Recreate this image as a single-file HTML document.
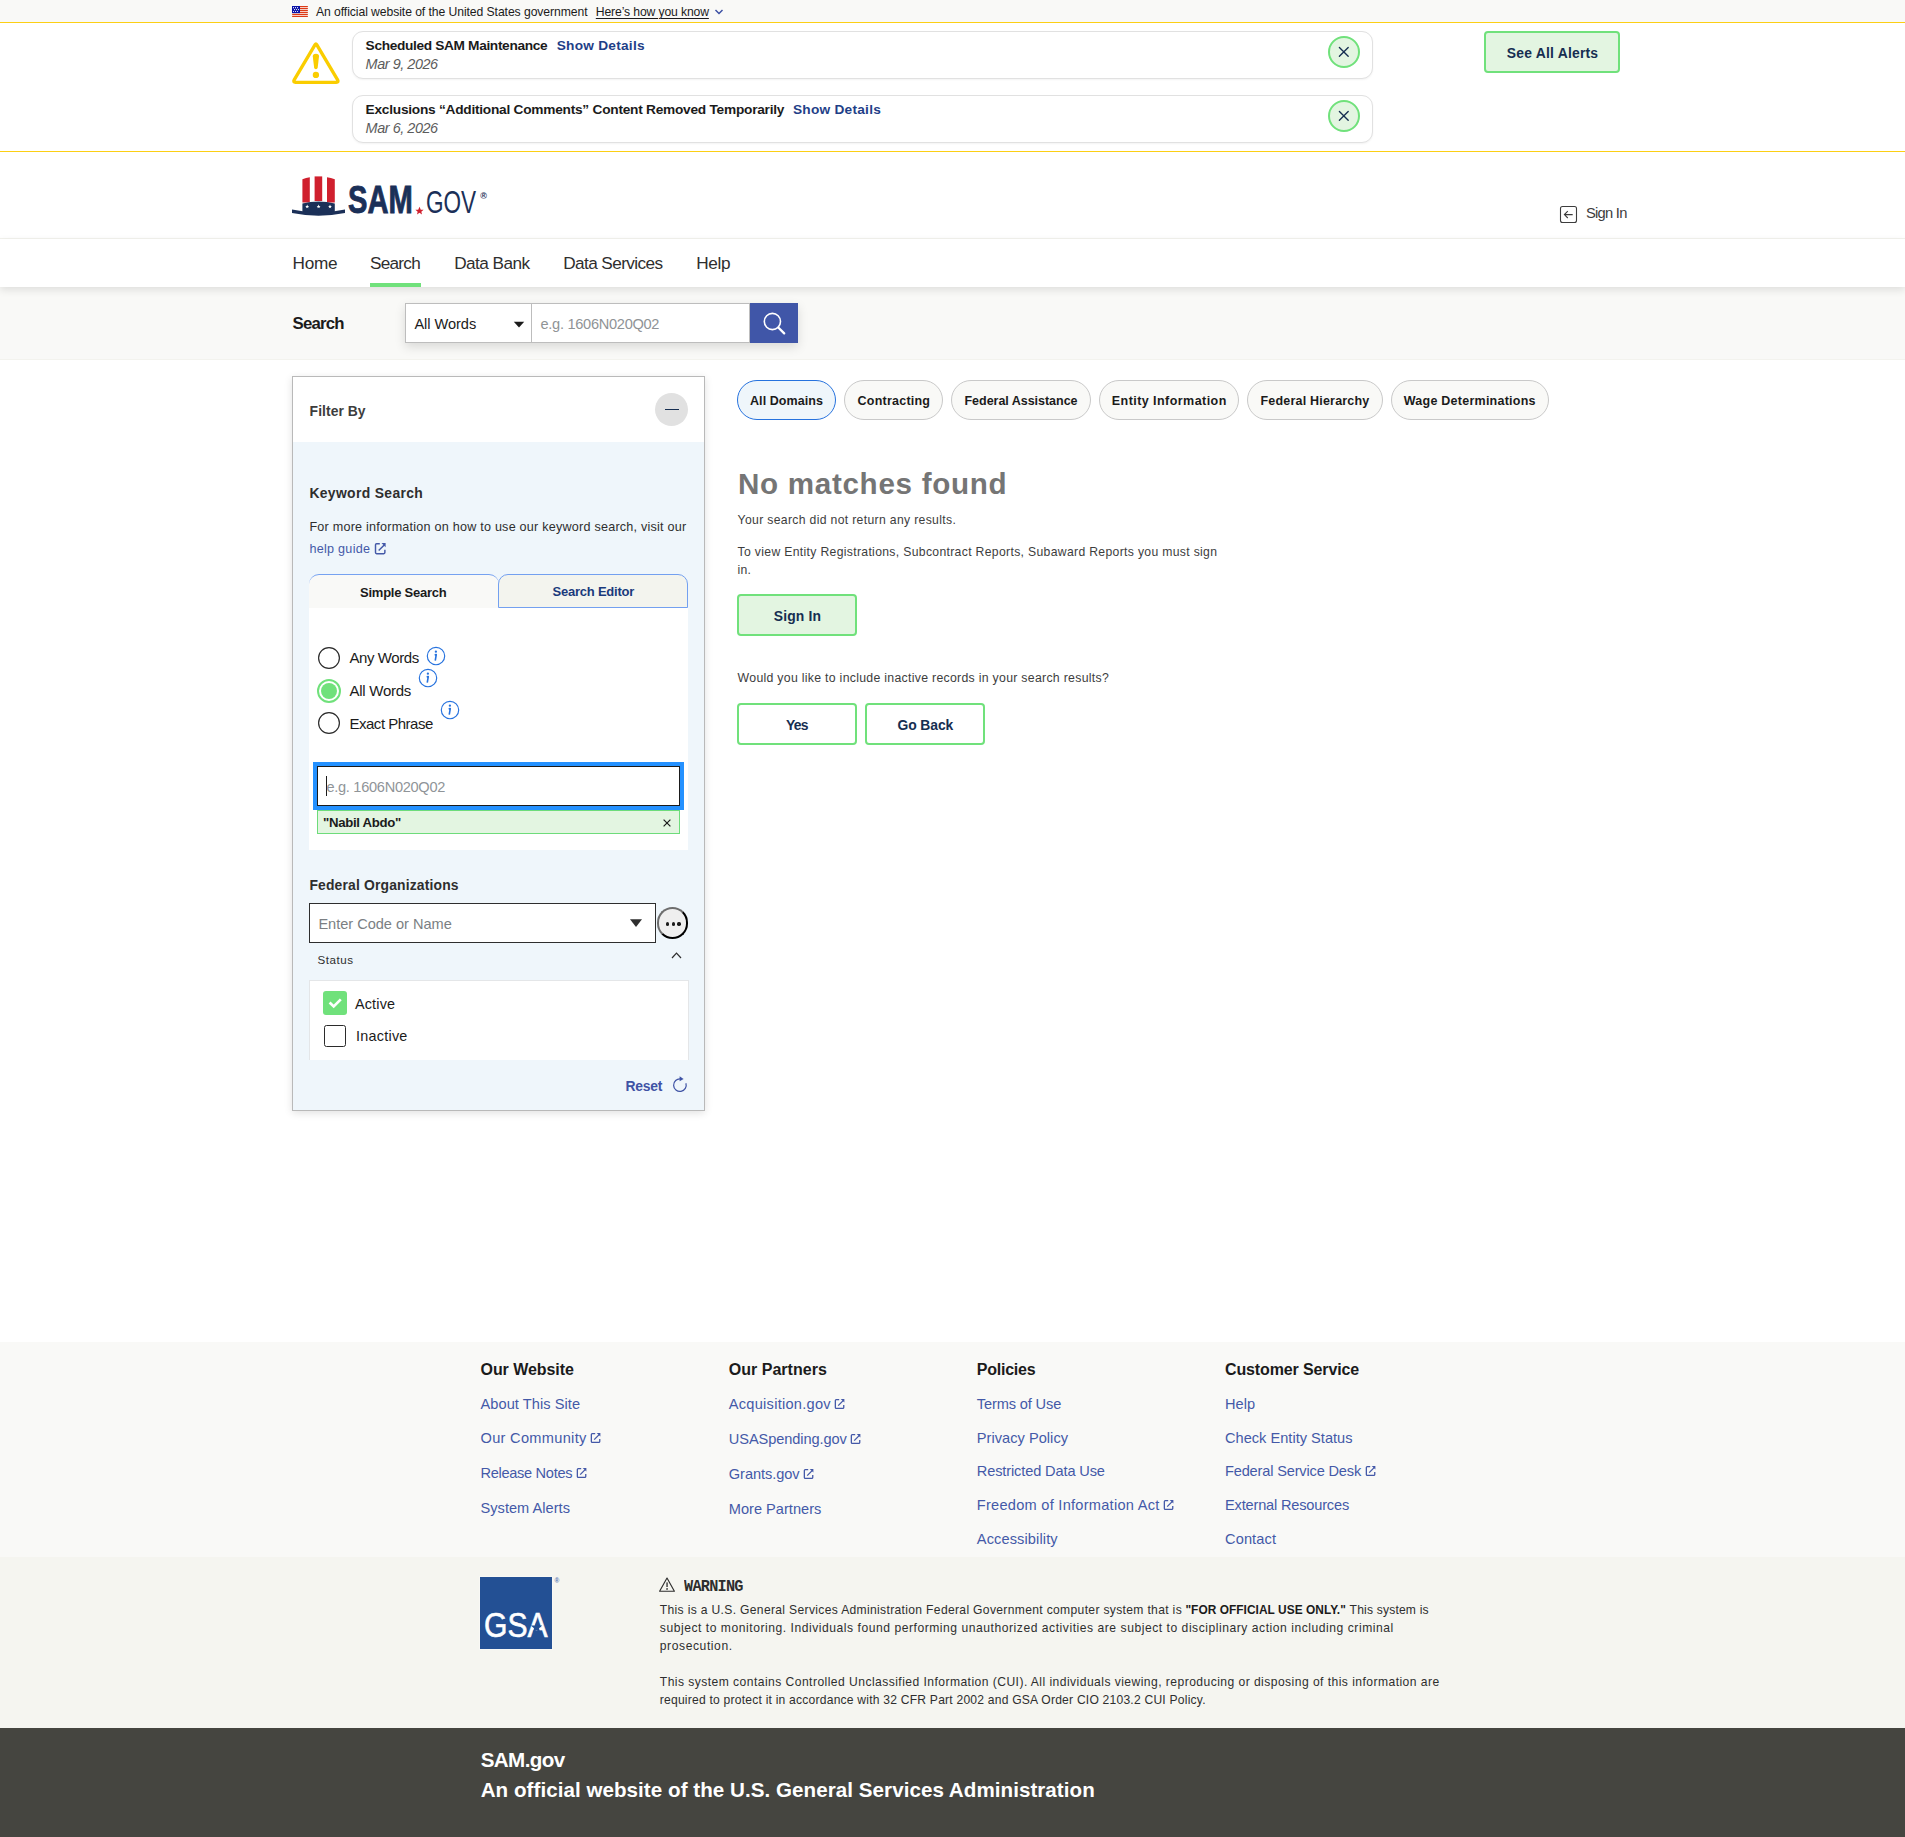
<!DOCTYPE html>
<html lang="en"><head><meta charset="utf-8"><title>SAM.gov | Search</title>
<meta name="viewport" content="width=1905">
<style>
*{box-sizing:content-box}
html,body{margin:0;padding:0}
body{width:1905px;height:1837px;position:relative;overflow:hidden;background:#fff;font-family:"Liberation Sans",sans-serif;-webkit-font-smoothing:antialiased}
.abs{position:absolute;margin:0;padding:0}
.g{position:static;display:block;margin:0;padding:0;border:0}
.t{position:absolute;margin:0;padding:0;white-space:nowrap;text-decoration:none;font-kerning:normal;font-family:"Liberation Sans",sans-serif;font-weight:400;font-style:normal}
.m{font-family:"Liberation Mono",monospace}
button{font:inherit;cursor:pointer}
a{cursor:pointer}
</style></head>
<body>
<section class="abs" style="left:0;top:0;width:1905px;height:22px;background:#f9f9f7">
<svg class="abs" style="left:292px;top:5.9px" width="16" height="11.2" viewBox="0 0 16 11.2"><rect width="16" height="11.2" fill="#fff"/><rect y="0" width="16" height="1.15" rx="0.4" fill="#dc3a16"/><rect y="2" width="16" height="1.15" rx="0.4" fill="#dc3a16"/><rect y="4" width="16" height="1.15" rx="0.4" fill="#dc3a16"/><rect y="6" width="16" height="1.15" rx="0.4" fill="#dc3a16"/><rect y="8" width="16" height="1.15" rx="0.4" fill="#dc3a16"/><rect y="10" width="16" height="1.15" rx="0.4" fill="#dc3a16"/><rect width="8" height="7.15" fill="#0b13a8"/><circle cx="1.5" cy="1.65" r="0.56" fill="#fff"/><circle cx="3.5" cy="1.65" r="0.56" fill="#fff"/><circle cx="5.5" cy="1.65" r="0.56" fill="#fff"/><circle cx="2.5" cy="3.6" r="0.56" fill="#fff"/><circle cx="4.5" cy="3.6" r="0.56" fill="#fff"/><circle cx="6.5" cy="3.6" r="0.56" fill="#fff"/><circle cx="1.5" cy="5.55" r="0.56" fill="#fff"/><circle cx="3.5" cy="5.55" r="0.56" fill="#fff"/><circle cx="5.5" cy="5.55" r="0.56" fill="#fff"/></svg>
<span class="t" style="left:316.00px;top:3px;font-size:12.2px;line-height:18px;color:#1b1b1b;letter-spacing:-0.078px;">An official website of the United States government</span>
<a class="t" style="left:595.80px;top:3px;font-size:12.2px;line-height:18px;color:#1b1b1b;letter-spacing:-0.135px;text-decoration:underline;text-underline-offset:1.5px;">Here’s how you know</a>
<svg class="abs" style="left:714px;top:8px" width="10" height="8" viewBox="0 0 10 8"><path d="M1.5 2 L5 5.6 L8.5 2" fill="none" stroke="#3a4ea3" stroke-width="1.4"/></svg>
</section>
<div class="abs" style="left:0;top:22px;width:1905px;height:1px;background:#fccf14"></div>
<section class="g" aria-label="System alerts">
<div class="abs" style="left:0;top:23px;width:1905px;height:128px;background:#fff"></div>
<svg class="abs" style="left:291px;top:41px" width="50" height="44" viewBox="0 0 50 44"><path d="M24.1 3.6 Q24.9 2.2 25.7 3.6 L46.6 38.9 Q47.9 41.3 45.3 41.3 H4.5 Q1.9 41.3 3.2 38.9 Z" fill="none" stroke="#facd00" stroke-width="3.3" stroke-linejoin="round"/><path d="M21.8 15.4 Q21.6 12.8 24.9 12.8 Q28.2 12.8 28 15.4 L26.7 26.6 Q26.5 28.2 24.9 28.2 Q23.3 28.2 23.1 26.6 Z" fill="#facd00"/><circle cx="24.9" cy="33.9" r="3.15" fill="#facd00"/></svg>
<div class="abs" style="left:352px;top:31px;width:1019px;height:46px;border:1px solid #e1e1e1;border-radius:11px;background:#fff;box-shadow:0 1px 2px rgba(0,0,0,.05)"></div>
<span class="t" style="left:365.60px;top:36px;font-size:13.7px;line-height:19px;font-weight:700;color:#1b1b1b;letter-spacing:-0.340px;">Scheduled SAM Maintenance</span>
<a class="t" style="left:556.75px;top:36px;font-size:13.7px;line-height:19px;font-weight:700;color:#1f3f88;letter-spacing:0.237px;">Show Details</a>
<span class="t" style="left:365.60px;top:54px;font-size:14.4px;line-height:20px;font-style:italic;color:#5c5c5c;letter-spacing:-0.430px;">Mar 9, 2026</span>
<button class="abs" style="left:1328px;top:36px;width:28px;height:28px;border:2px solid #70e17b;border-radius:50%;background:#e3f5e1"></button>
<svg class="abs" style="left:1338px;top:46px" width="12" height="12" viewBox="0 0 12 12"><path d="M1.4 1.4 L10.2 10.2 M10.2 1.4 L1.4 10.2" stroke="#162e51" stroke-width="1.35" stroke-linecap="round"/></svg>
<div class="abs" style="left:352px;top:95px;width:1019px;height:46px;border:1px solid #e1e1e1;border-radius:11px;background:#fff;box-shadow:0 1px 2px rgba(0,0,0,.05)"></div>
<span class="t" style="left:365.60px;top:100px;font-size:13.7px;line-height:19px;font-weight:700;color:#1b1b1b;letter-spacing:-0.245px;">Exclusions “Additional Comments” Content Removed Temporarily</span>
<a class="t" style="left:793.00px;top:100px;font-size:13.7px;line-height:19px;font-weight:700;color:#1f3f88;letter-spacing:0.237px;">Show Details</a>
<span class="t" style="left:365.60px;top:118px;font-size:14.4px;line-height:20px;font-style:italic;color:#5c5c5c;letter-spacing:-0.430px;">Mar 6, 2026</span>
<button class="abs" style="left:1328px;top:100px;width:28px;height:28px;border:2px solid #70e17b;border-radius:50%;background:#e3f5e1"></button>
<svg class="abs" style="left:1338px;top:110px" width="12" height="12" viewBox="0 0 12 12"><path d="M1.4 1.4 L10.2 10.2 M10.2 1.4 L1.4 10.2" stroke="#162e51" stroke-width="1.35" stroke-linecap="round"/></svg>
<button class="abs" style="left:1484px;top:31px;width:132px;height:38px;border:2px solid #70e17b;border-radius:4px;background:#e3f5e1"></button>
<span class="t" style="left:1506.80px;top:43px;font-size:13.9px;line-height:20px;font-weight:700;color:#162e51;letter-spacing:0.213px;">See All Alerts</span>
<div class="abs" style="left:0;top:151px;width:1905px;height:1px;background:#fccf14"></div>
</section>
<header class="g">
<div class="abs" style="left:0;top:152px;width:1905px;height:86px;background:#fff"></div>
<svg class="abs" style="left:290px;top:174px" width="60" height="44" viewBox="290 174 60 44"><path d="M302.4 179.2 Q306 177.7 309.8 177.3 V202.4 H302.4 Z" fill="#d0202e"/><path d="M314.6 176.4 H322.2 V201 H314.6 Z" fill="#d0202e"/><path d="M327 177.3 Q330.8 177.7 334.8 179.2 V202.4 H327 Z" fill="#d0202e"/><path d="M302.4 203.6 Q318.6 199.6 334.8 203.6 V212 Q318.6 215 302.4 212 Z" fill="#1b3058"/><path d="M292 209.6 Q318.5 215.4 345 209.6 V213.1 Q318.5 218.4 292 213.1 Z" fill="#1b3058"/><path transform="translate(307.2 206.6)" d="M0 -2 L0.59 -0.62 L1.9 -0.62 L0.85 0.3 L1.18 1.62 L0 0.85 L-1.18 1.62 L-0.85 0.3 L-1.9 -0.62 L-0.59 -0.62 Z" fill="#fff"/><path transform="translate(318.6 206.6)" d="M0 -2 L0.59 -0.62 L1.9 -0.62 L0.85 0.3 L1.18 1.62 L0 0.85 L-1.18 1.62 L-0.85 0.3 L-1.9 -0.62 L-0.59 -0.62 Z" fill="#fff"/><path transform="translate(330 206.6)" d="M0 -2 L0.59 -0.62 L1.9 -0.62 L0.85 0.3 L1.18 1.62 L0 0.85 L-1.18 1.62 L-0.85 0.3 L-1.9 -0.62 L-0.59 -0.62 Z" fill="#fff"/></svg>
<span class="t" style="left:347.80px;top:176px;font-size:38.6px;line-height:47px;font-weight:700;color:#1b3058;letter-spacing:0.000px;transform:scaleX(.755);transform-origin:0 0;-webkit-text-stroke:0.9px #1b3058;">SAM</span>
<svg class="abs" style="left:414px;top:206px" width="11" height="10" viewBox="-5.5 -5 11 10"><path d="M0 -4.3 L1.27 -1.33 L4.1 -1.33 L1.83 0.65 L2.53 3.5 L0 1.83 L-2.53 3.5 L-1.83 0.65 L-4.1 -1.33 L-1.27 -1.33 Z" fill="#d0202e"/></svg>
<span class="t" style="left:426.00px;top:183px;font-size:30.6px;line-height:38px;color:#1b3058;letter-spacing:0.000px;transform:scaleX(.737);transform-origin:0 0;">GOV</span>
<span class="t" style="left:480.20px;top:189px;font-size:9px;line-height:14px;font-weight:700;color:#1b3058;letter-spacing:0.000px;">®</span>
<svg class="abs" style="left:1559px;top:205px" width="19" height="19" viewBox="0 0 19 19"><rect x="1.5" y="1.5" width="16" height="16" rx="2" fill="none" stroke="#3d3d3d" stroke-width="1.1"/><path d="M13.7 9.6 H5.6 M8.8 6.2 L5.4 9.6 L8.8 13" fill="none" stroke="#3d3d3d" stroke-width="1.1"/></svg>
<a class="t" style="left:1586.00px;top:202px;font-size:15.1px;line-height:21px;color:#3d3d3d;letter-spacing:-0.755px;transform:scaleX(0.9748);transform-origin:0 50%;">Sign In</a>
<div class="abs" style="left:0;top:238px;width:1905px;height:1px;background:#f3f3ee"></div>
</header>
<nav class="g" aria-label="Primary navigation">
<div class="abs" style="left:0;top:239px;width:1905px;height:48px;background:#fff;box-shadow:0 3px 8px rgba(0,0,0,.11);z-index:3"></div>
<a class="t" style="left:292.50px;top:251px;font-size:17.2px;line-height:24px;color:#2e2e2e;letter-spacing:-0.286px;z-index:4;">Home</a>
<a class="t" style="left:370.00px;top:251px;font-size:17.2px;line-height:24px;color:#2e2e2e;letter-spacing:-0.754px;z-index:4;">Search</a>
<a class="t" style="left:454.20px;top:251px;font-size:17.2px;line-height:24px;color:#2e2e2e;letter-spacing:-0.558px;z-index:4;">Data Bank</a>
<a class="t" style="left:563.20px;top:251px;font-size:17.2px;line-height:24px;color:#2e2e2e;letter-spacing:-0.583px;z-index:4;">Data Services</a>
<a class="t" style="left:696.20px;top:251px;font-size:17.2px;line-height:24px;color:#2e2e2e;letter-spacing:-0.353px;z-index:4;">Help</a>
<div class="abs" style="left:370px;top:283px;width:51px;height:4px;background:#70e17b;z-index:4"></div>
</nav>
<form class="g" role="search">
<div class="abs" style="left:0;top:287px;width:1905px;height:72px;background:#f9f9f7;border-bottom:1px solid #f3f3ee"></div>
<span class="t" style="left:292.50px;top:312px;font-size:16.8px;line-height:23px;font-weight:700;color:#1b1b1b;letter-spacing:-0.797px;">Search</span>
<div class="abs" style="left:405px;top:303px;width:393px;height:40px;box-shadow:0 4px 10px rgba(0,0,0,.13);background:#fff"></div>
<div class="abs" style="left:405px;top:303px;width:125px;height:38px;border:1px solid #bdbdbd;background:#fff"></div>
<div class="abs" style="left:532px;top:303px;width:217px;height:38px;border:1px solid #bdbdbd;border-left:0;background:#fff"></div>
<span class="t" style="left:414.40px;top:314px;font-size:14.6px;line-height:20px;color:#1b1b1b;letter-spacing:-0.048px;">All Words</span>
<svg class="abs" style="left:513px;top:321px" width="12" height="7" viewBox="0 0 12 7"><path d="M0.8 0.8 H11.2 L6 6.4 Z" fill="#1b1b1b"/></svg>
<span class="t" style="left:540.50px;top:314px;font-size:14.6px;line-height:20px;color:#8f9396;letter-spacing:-0.290px;">e.g. 1606N020Q02</span>
<button class="abs" style="left:750px;top:303px;width:48px;height:40px;background:#4056a8;border:0"></button>
<svg class="abs" style="left:760px;top:310px" width="28" height="28" viewBox="760 310 28 28"><circle cx="772.4" cy="321.5" r="8.1" fill="none" stroke="#fff" stroke-width="1.6"/><path d="M778.3 327.5 L784.2 333.4" stroke="#fff" stroke-width="2.3" stroke-linecap="round"/></svg>
</form>
<main class="g">
<aside class="g" aria-label="Filter By">
<div class="abs" style="left:292px;top:376px;width:411px;height:733px;border:1px solid #b9b9b9;background:#eff6fb;box-shadow:0 2px 8px rgba(0,0,0,.12)"></div>
<div class="abs" style="left:293px;top:377px;width:411px;height:65px;background:#fff"></div>
<span class="t" style="left:309.60px;top:401px;font-size:13.9px;line-height:20px;font-weight:700;color:#3d3d3d;letter-spacing:0.053px;">Filter By</span>
<button class="abs" style="left:655px;top:393px;width:33px;height:33px;border-radius:50%;background:#e1e1e1;border:0"></button>
<div class="abs" style="left:665px;top:409px;width:14px;height:1.3px;background:#162e51"></div>
<span class="t" style="left:309.40px;top:483px;font-size:13.9px;line-height:20px;font-weight:700;color:#2e2e2e;letter-spacing:0.349px;">Keyword Search</span>
<span class="t" style="left:309.40px;top:518px;font-size:12.6px;line-height:18px;color:#2e2e2e;letter-spacing:0.226px;">For more information on how to use our keyword search, visit our</span>
<a class="t" style="left:309.40px;top:540px;font-size:12.6px;line-height:18px;color:#4459a8;letter-spacing:0.275px;">help guide</a>
<svg class="abs" style="left:374.4px;top:542px" width="13.4" height="13.4" viewBox="0 0 12 12"><path d="M9.75 6.9 V9.5 Q9.75 10.45 8.8 10.45 H2.3 Q1.35 10.45 1.35 9.5 V2.5 Q1.35 1.55 2.3 1.55 H5.2 M4.2 7.6 L9.4 2.4" fill="none" stroke="#4459a8" stroke-width="1.3"/><path d="M6.7 0.9 H10.4 V4.6 Z" fill="#4459a8"/></svg>
<div class="abs" style="left:309px;top:574px;width:190px;height:33px;border-top:1px solid #76a2f1;border-radius:10px 10px 0 0;background:#f9f9f7"></div>
<div class="abs" style="left:498px;top:574px;width:188px;height:32px;border:1px solid #73a0f0;border-radius:10px 10px 0 0;background:#f3f4ee"></div>
<span class="t" style="left:360.00px;top:583px;font-size:13px;line-height:19px;font-weight:700;color:#1b1b1b;letter-spacing:-0.234px;">Simple Search</span>
<a class="t" style="left:552.50px;top:582px;font-size:13px;line-height:19px;font-weight:700;color:#1a3a7c;letter-spacing:-0.228px;">Search Editor</a>
<div class="abs" style="left:309px;top:608px;width:379px;height:241.5px;background:#fff"></div>
<svg class="abs" style="left:316px;top:645px" width="26" height="26" viewBox="-13 -13 26 26"><circle r="10.4" fill="#fff" stroke="#2b2b2b" stroke-width="1.2"/></svg>
<label class="t" style="left:349.50px;top:647px;font-size:15px;line-height:21px;color:#1b1b1b;letter-spacing:-0.412px;">Any Words</label>
<svg class="abs" style="left:425.2px;top:645.2px" width="22" height="22" viewBox="-11 -11 22 22"><circle r="8.7" fill="none" stroke="#2672de" stroke-width="1.15"/><circle cx="-0.1" cy="-4.35" r="1.15" fill="#2672de"/><path d="M-1.3 -1.1 L0.25 -1.4 L-0.75 4.7" fill="none" stroke="#2672de" stroke-width="1.6" stroke-linejoin="round"/></svg>
<svg class="abs" style="left:316px;top:678px" width="26" height="26" viewBox="-13 -13 26 26"><circle r="11" fill="#fff" stroke="#70e17b" stroke-width="2"/><circle r="8" fill="#70e17b"/></svg>
<label class="t" style="left:349.50px;top:680px;font-size:15px;line-height:21px;color:#1b1b1b;letter-spacing:-0.263px;">All Words</label>
<svg class="abs" style="left:417.4px;top:666.5px" width="22" height="22" viewBox="-11 -11 22 22"><circle r="8.7" fill="none" stroke="#2672de" stroke-width="1.15"/><circle cx="-0.1" cy="-4.35" r="1.15" fill="#2672de"/><path d="M-1.3 -1.1 L0.25 -1.4 L-0.75 4.7" fill="none" stroke="#2672de" stroke-width="1.6" stroke-linejoin="round"/></svg>
<svg class="abs" style="left:316px;top:710px" width="26" height="26" viewBox="-13 -13 26 26"><circle r="10.4" fill="#fff" stroke="#2b2b2b" stroke-width="1.2"/></svg>
<label class="t" style="left:349.50px;top:713px;font-size:15px;line-height:21px;color:#1b1b1b;letter-spacing:-0.493px;">Exact Phrase</label>
<svg class="abs" style="left:439.3px;top:699.3px" width="22" height="22" viewBox="-11 -11 22 22"><circle r="8.7" fill="none" stroke="#2672de" stroke-width="1.15"/><circle cx="-0.1" cy="-4.35" r="1.15" fill="#2672de"/><path d="M-1.3 -1.1 L0.25 -1.4 L-0.75 4.7" fill="none" stroke="#2672de" stroke-width="1.6" stroke-linejoin="round"/></svg>
<div class="abs" style="left:317px;top:766px;width:361px;height:38px;border:1px solid #1b1b1b;outline:4px solid #2491ff;outline-offset:0;background:#fff"></div>
<div class="abs" style="left:326px;top:776px;width:1px;height:20px;background:#1b1b1b"></div>
<span class="t" style="left:326.40px;top:777px;font-size:14.6px;line-height:20px;color:#8f9498;letter-spacing:-0.290px;">e.g. 1606N020Q02</span>
<div class="abs" style="left:317px;top:810px;width:361px;height:22px;border:1px solid #6ddc7a;background:#e3f5e1"></div>
<span class="t" style="left:323.00px;top:813px;font-size:13.2px;line-height:19px;font-weight:700;color:#1b1b1b;letter-spacing:-0.311px;">"Nabil Abdo"</span>
<svg class="abs" style="left:662px;top:818px" width="10" height="10" viewBox="0 0 10 10"><path d="M1.6 1.6 L8.4 8.4 M8.4 1.6 L1.6 8.4" stroke="#1b1b1b" stroke-width="1.2"/></svg>
<span class="t" style="left:309.40px;top:875px;font-size:13.9px;line-height:20px;font-weight:700;color:#2e2e2e;letter-spacing:0.165px;">Federal Organizations</span>
<div class="abs" style="left:309px;top:903px;width:345px;height:37.5px;border:1px solid #2e2e2e;background:#fff"></div>
<span class="t" style="left:318.40px;top:914px;font-size:14.6px;line-height:20px;color:#7b7f83;letter-spacing:-0.026px;">Enter Code or Name</span>
<svg class="abs" style="left:629px;top:918px" width="14" height="10" viewBox="0 0 14 10"><path d="M1 1.2 H13 L7 9 Z" fill="#2e2e2e"/></svg>
<button class="abs" style="left:656.6px;top:907px;width:27.4px;height:27.6px;border:2px solid #000;border-color:#6e6e6e #000 #000 #6e6e6e;border-radius:50%;background:#efefef"></button>
<div class="abs" style="left:665.85px;top:922.45px;width:3.3px;height:3.3px;border-radius:50%;background:#1b1b1b"></div>
<div class="abs" style="left:671.65px;top:922.45px;width:3.3px;height:3.3px;border-radius:50%;background:#1b1b1b"></div>
<div class="abs" style="left:677.45px;top:922.45px;width:3.3px;height:3.3px;border-radius:50%;background:#1b1b1b"></div>
<span class="t" style="left:317.60px;top:951px;font-size:11.6px;line-height:17px;color:#2e2e2e;letter-spacing:0.525px;">Status</span>
<svg class="abs" style="left:670px;top:950px" width="14" height="10" viewBox="0 0 14 10"><path d="M2 8 L6.5 3.1 L11 8" fill="none" stroke="#2e2e2e" stroke-width="1.2"/></svg>
<div class="abs" style="left:309px;top:979.5px;width:377.5px;height:79px;border:1px solid #e4e6e8;border-bottom:0;background:#fff"></div>
<div class="abs" style="left:323px;top:991px;width:24px;height:24px;border-radius:3px;background:#70e17b"></div>
<svg class="abs" style="left:323px;top:991px" width="24" height="24" viewBox="0 0 24 24"><path d="M6.6 11.6 L10.7 15.4 L17.8 8.4" fill="none" stroke="#fff" stroke-width="2.7"/></svg>
<label class="t" style="left:355.00px;top:994px;font-size:14.4px;line-height:20px;color:#1b1b1b;letter-spacing:0.159px;">Active</label>
<div class="abs" style="left:324px;top:1025px;width:19.5px;height:19.5px;border:1.5px solid #2b2b2b;border-radius:2.5px;background:#fff"></div>
<label class="t" style="left:355.90px;top:1026px;font-size:14.4px;line-height:20px;color:#1b1b1b;letter-spacing:0.270px;">Inactive</label>
<a class="t" style="left:625.50px;top:1076px;font-size:13.9px;line-height:20px;font-weight:700;color:#3f53a5;letter-spacing:-0.211px;">Reset</a>
<svg class="abs" style="left:671px;top:1075px" width="18" height="19" viewBox="671 1075 18 19"><path d="M680.6 1078.9 A6.3 6.3 0 1 0 685.9 1083.2" fill="none" stroke="#3f53a5" stroke-width="1.2"/><path d="M679.6 1076.2 L683.6 1078.9 L679.6 1081.2 Z" fill="#3f53a5"/></svg>
</aside>
<section class="g" aria-label="Search results">
<button class="abs" style="left:737px;top:380px;width:97px;height:38px;border:1px solid #2672de;background:#eff6fb;border-radius:20px"></button>
<span class="t" style="left:750.00px;top:392px;font-size:12.5px;line-height:18px;font-weight:700;color:#1b1b1b;letter-spacing:0.075px;">All Domains</span>
<button class="abs" style="left:844.2px;top:380px;width:96.6px;height:38px;border:1px solid #c9c9c9;background:#f9f9f7;border-radius:20px"></button>
<span class="t" style="left:857.50px;top:392px;font-size:12.5px;line-height:18px;font-weight:700;color:#1b1b1b;letter-spacing:0.236px;">Contracting</span>
<button class="abs" style="left:951.2px;top:380px;width:137.6px;height:38px;border:1px solid #c9c9c9;background:#f9f9f7;border-radius:20px"></button>
<span class="t" style="left:964.50px;top:392px;font-size:12.5px;line-height:18px;font-weight:700;color:#1b1b1b;letter-spacing:-0.028px;">Federal Assistance</span>
<button class="abs" style="left:1099.2px;top:380px;width:137.6px;height:38px;border:1px solid #c9c9c9;background:#f9f9f7;border-radius:20px"></button>
<span class="t" style="left:1111.80px;top:392px;font-size:12.5px;line-height:18px;font-weight:700;color:#1b1b1b;letter-spacing:0.444px;">Entity Information</span>
<button class="abs" style="left:1247.2px;top:380px;width:133.4px;height:38px;border:1px solid #c9c9c9;background:#f9f9f7;border-radius:20px"></button>
<span class="t" style="left:1260.50px;top:392px;font-size:12.5px;line-height:18px;font-weight:700;color:#1b1b1b;letter-spacing:0.199px;">Federal Hierarchy</span>
<button class="abs" style="left:1391.2px;top:380px;width:155.8px;height:38px;border:1px solid #c9c9c9;background:#f9f9f7;border-radius:20px"></button>
<span class="t" style="left:1403.80px;top:392px;font-size:12.5px;line-height:18px;font-weight:700;color:#1b1b1b;letter-spacing:0.242px;">Wage Determinations</span>
<h1 class="t" style="left:737.90px;top:465px;font-size:29.6px;line-height:37px;font-weight:700;color:#757575;letter-spacing:0.711px;">No matches found</h1>
<p class="t" style="left:737.60px;top:511px;font-size:12.2px;line-height:18px;color:#3d3d3d;letter-spacing:0.334px;">Your search did not return any results.</p>
<p class="t" style="left:737.60px;top:543px;font-size:12.2px;line-height:18px;color:#3d3d3d;letter-spacing:0.328px;">To view Entity Registrations, Subcontract Reports, Subaward Reports you must sign</p>
<p class="t" style="left:737.60px;top:561px;font-size:12.2px;line-height:18px;color:#3d3d3d;letter-spacing:0.263px;">in.</p>
<button class="abs" style="left:737px;top:594px;width:116px;height:38px;border:2px solid #70e17b;border-radius:4px;background:#e3f5e1"></button>
<span class="t" style="left:773.70px;top:606px;font-size:13.9px;line-height:20px;font-weight:700;color:#162e51;letter-spacing:0.181px;">Sign In</span>
<p class="t" style="left:737.60px;top:669px;font-size:12.3px;line-height:18px;color:#3d3d3d;letter-spacing:0.288px;">Would you like to include inactive records in your search results?</p>
<button class="abs" style="left:737px;top:703px;width:116px;height:38px;border:2px solid #70e17b;border-radius:4px;background:#fff"></button>
<span class="t" style="left:786.00px;top:715px;font-size:13.9px;line-height:20px;font-weight:700;color:#162e51;letter-spacing:-0.677px;">Yes</span>
<button class="abs" style="left:865px;top:703px;width:116px;height:38px;border:2px solid #70e17b;border-radius:4px;background:#fff"></button>
<span class="t" style="left:897.50px;top:715px;font-size:13.9px;line-height:20px;font-weight:700;color:#162e51;letter-spacing:-0.093px;">Go Back</span>
</section>
</main>
<footer class="g">
<div class="abs" style="left:0;top:1342px;width:1905px;height:215px;background:#f9f9f7"></div>
<h2 class="t" style="left:480.50px;top:1359px;font-size:16px;line-height:21px;font-weight:700;color:#1b1b1b;letter-spacing:-0.065px;">Our Website</h2>
<a class="t" style="left:480.50px;top:1394px;font-size:14.6px;line-height:20px;color:#4459a8;letter-spacing:0.057px;">About This Site</a>
<a class="t" style="left:480.50px;top:1428px;font-size:14.6px;line-height:20px;color:#4459a8;letter-spacing:0.301px;">Our Community</a>
<svg class="abs" style="left:589.8px;top:1432px" width="12" height="12" viewBox="0 0 12 12"><path d="M9.75 6.9 V9.5 Q9.75 10.45 8.8 10.45 H2.3 Q1.35 10.45 1.35 9.5 V2.5 Q1.35 1.55 2.3 1.55 H5.2 M4.2 7.6 L9.4 2.4" fill="none" stroke="#4459a8" stroke-width="1.3"/><path d="M6.7 0.9 H10.4 V4.6 Z" fill="#4459a8"/></svg>
<a class="t" style="left:480.50px;top:1463px;font-size:14.6px;line-height:20px;color:#4459a8;letter-spacing:-0.311px;">Release Notes</a>
<svg class="abs" style="left:576.0px;top:1467px" width="12" height="12" viewBox="0 0 12 12"><path d="M9.75 6.9 V9.5 Q9.75 10.45 8.8 10.45 H2.3 Q1.35 10.45 1.35 9.5 V2.5 Q1.35 1.55 2.3 1.55 H5.2 M4.2 7.6 L9.4 2.4" fill="none" stroke="#4459a8" stroke-width="1.3"/><path d="M6.7 0.9 H10.4 V4.6 Z" fill="#4459a8"/></svg>
<a class="t" style="left:480.50px;top:1498px;font-size:14.6px;line-height:20px;color:#4459a8;letter-spacing:0.023px;">System Alerts</a>
<h2 class="t" style="left:728.80px;top:1359px;font-size:16px;line-height:21px;font-weight:700;color:#1b1b1b;letter-spacing:0.017px;">Our Partners</h2>
<a class="t" style="left:728.80px;top:1394px;font-size:14.6px;line-height:20px;color:#4459a8;letter-spacing:0.259px;">Acquisition.gov</a>
<svg class="abs" style="left:834.1px;top:1398px" width="12" height="12" viewBox="0 0 12 12"><path d="M9.75 6.9 V9.5 Q9.75 10.45 8.8 10.45 H2.3 Q1.35 10.45 1.35 9.5 V2.5 Q1.35 1.55 2.3 1.55 H5.2 M4.2 7.6 L9.4 2.4" fill="none" stroke="#4459a8" stroke-width="1.3"/><path d="M6.7 0.9 H10.4 V4.6 Z" fill="#4459a8"/></svg>
<a class="t" style="left:728.80px;top:1429px;font-size:14.6px;line-height:20px;color:#4459a8;letter-spacing:-0.090px;">USASpending.gov</a>
<svg class="abs" style="left:850.3px;top:1433px" width="12" height="12" viewBox="0 0 12 12"><path d="M9.75 6.9 V9.5 Q9.75 10.45 8.8 10.45 H2.3 Q1.35 10.45 1.35 9.5 V2.5 Q1.35 1.55 2.3 1.55 H5.2 M4.2 7.6 L9.4 2.4" fill="none" stroke="#4459a8" stroke-width="1.3"/><path d="M6.7 0.9 H10.4 V4.6 Z" fill="#4459a8"/></svg>
<a class="t" style="left:728.80px;top:1464px;font-size:14.6px;line-height:20px;color:#4459a8;letter-spacing:-0.066px;">Grants.gov</a>
<svg class="abs" style="left:803.1px;top:1468px" width="12" height="12" viewBox="0 0 12 12"><path d="M9.75 6.9 V9.5 Q9.75 10.45 8.8 10.45 H2.3 Q1.35 10.45 1.35 9.5 V2.5 Q1.35 1.55 2.3 1.55 H5.2 M4.2 7.6 L9.4 2.4" fill="none" stroke="#4459a8" stroke-width="1.3"/><path d="M6.7 0.9 H10.4 V4.6 Z" fill="#4459a8"/></svg>
<a class="t" style="left:728.80px;top:1499px;font-size:14.6px;line-height:20px;color:#4459a8;letter-spacing:0.003px;">More Partners</a>
<h2 class="t" style="left:976.80px;top:1359px;font-size:16px;line-height:21px;font-weight:700;color:#1b1b1b;letter-spacing:-0.241px;">Policies</h2>
<a class="t" style="left:976.80px;top:1394px;font-size:14.6px;line-height:20px;color:#4459a8;letter-spacing:-0.134px;">Terms of Use</a>
<a class="t" style="left:976.80px;top:1428px;font-size:14.6px;line-height:20px;color:#4459a8;letter-spacing:0.029px;">Privacy Policy</a>
<a class="t" style="left:976.80px;top:1461px;font-size:14.6px;line-height:20px;color:#4459a8;letter-spacing:-0.133px;">Restricted Data Use</a>
<a class="t" style="left:976.80px;top:1495px;font-size:14.6px;line-height:20px;color:#4459a8;letter-spacing:0.259px;">Freedom of Information Act</a>
<svg class="abs" style="left:1162.8px;top:1499px" width="12" height="12" viewBox="0 0 12 12"><path d="M9.75 6.9 V9.5 Q9.75 10.45 8.8 10.45 H2.3 Q1.35 10.45 1.35 9.5 V2.5 Q1.35 1.55 2.3 1.55 H5.2 M4.2 7.6 L9.4 2.4" fill="none" stroke="#4459a8" stroke-width="1.3"/><path d="M6.7 0.9 H10.4 V4.6 Z" fill="#4459a8"/></svg>
<a class="t" style="left:976.80px;top:1529px;font-size:14.6px;line-height:20px;color:#4459a8;letter-spacing:0.110px;">Accessibility</a>
<h2 class="t" style="left:1225.00px;top:1359px;font-size:16px;line-height:21px;font-weight:700;color:#1b1b1b;letter-spacing:-0.124px;">Customer Service</h2>
<a class="t" style="left:1225.00px;top:1394px;font-size:14.6px;line-height:20px;color:#4459a8;letter-spacing:-0.005px;">Help</a>
<a class="t" style="left:1225.00px;top:1428px;font-size:14.6px;line-height:20px;color:#4459a8;letter-spacing:0.008px;">Check Entity Status</a>
<a class="t" style="left:1225.00px;top:1461px;font-size:14.6px;line-height:20px;color:#4459a8;letter-spacing:-0.175px;">Federal Service Desk</a>
<svg class="abs" style="left:1364.7px;top:1465px" width="12" height="12" viewBox="0 0 12 12"><path d="M9.75 6.9 V9.5 Q9.75 10.45 8.8 10.45 H2.3 Q1.35 10.45 1.35 9.5 V2.5 Q1.35 1.55 2.3 1.55 H5.2 M4.2 7.6 L9.4 2.4" fill="none" stroke="#4459a8" stroke-width="1.3"/><path d="M6.7 0.9 H10.4 V4.6 Z" fill="#4459a8"/></svg>
<a class="t" style="left:1225.00px;top:1495px;font-size:14.6px;line-height:20px;color:#4459a8;letter-spacing:-0.186px;">External Resources</a>
<a class="t" style="left:1225.00px;top:1529px;font-size:14.6px;line-height:20px;color:#4459a8;letter-spacing:0.117px;">Contact</a>
<div class="abs" style="left:0;top:1557px;width:1905px;height:171px;background:#f5f5f0"></div>
<div class="abs" style="left:480px;top:1577px;width:72px;height:72px;background:#235094;outline:1px solid rgba(255,255,255,.35)"></div>
<span class="t" style="left:484.20px;top:1603px;font-size:35px;line-height:43px;color:#fff;letter-spacing:0.000px;transform:scaleX(.86);transform-origin:0 0;-webkit-text-stroke:0.6px #fff;">GSA</span>
<svg class="abs" style="left:528px;top:1619px" width="17" height="17" viewBox="-8.5 -8.5 17 17"><path d="M0 -6 L1.6 -1.9 L5.7 -1.9 L2.5 0.8 L3.6 4.9 L0 2.5 L-3.6 4.9 L-2.5 0.8 L-5.7 -1.9 L-1.6 -1.9 Z" fill="#235094"/></svg>
<span class="t" style="left:554.60px;top:1575px;font-size:6.5px;line-height:11px;font-weight:700;color:#5878b0;letter-spacing:0.000px;">®</span>
<svg class="abs" style="left:658px;top:1576px" width="18" height="17" viewBox="0 0 18 17"><path d="M9 2 L16.4 15.2 H1.6 Z" fill="none" stroke="#2e2e2e" stroke-width="1.15" stroke-linejoin="round"/><rect x="8.4" y="6.4" width="1.3" height="4.6" fill="#2e2e2e"/><circle cx="9.05" cy="12.9" r="0.85" fill="#2e2e2e"/></svg>
<span class="t m" style="left:683.50px;top:1576px;font-size:15.6px;line-height:22px;font-weight:700;color:#2e2e2e;letter-spacing:-0.780px;transform:scaleX(0.9780);transform-origin:0 50%;">WARNING</span>
<p class="g">
<span class="t" style="left:659.80px;top:1601px;font-size:12.1px;line-height:18px;color:#2e2e2e;letter-spacing:0.332px;white-space:pre;">This is a U.S. General Services Administration Federal Government computer system that is </span>
<b class="t" style="left:1185.40px;top:1601px;font-size:11.9px;line-height:18px;font-weight:700;color:#1b1b1b;letter-spacing:0.049px;">"FOR OFFICIAL USE ONLY."</b>
<span class="t" style="left:1349.60px;top:1601px;font-size:12.1px;line-height:18px;color:#2e2e2e;letter-spacing:0.184px;">This system is</span>
<span class="t" style="left:659.80px;top:1619px;font-size:12.1px;line-height:18px;color:#2e2e2e;letter-spacing:0.541px;">subject to monitoring. Individuals found performing unauthorized activities are subject to disciplinary action including criminal</span>
<span class="t" style="left:659.80px;top:1637px;font-size:12.1px;line-height:18px;color:#2e2e2e;letter-spacing:0.583px;">prosecution.</span>
</p><p class="g">
<span class="t" style="left:659.80px;top:1673px;font-size:12.1px;line-height:18px;color:#2e2e2e;letter-spacing:0.452px;">This system contains Controlled Unclassified Information (CUI). All individuals viewing, reproducing or disposing of this information are</span>
<span class="t" style="left:659.80px;top:1691px;font-size:12.1px;line-height:18px;color:#2e2e2e;letter-spacing:0.216px;">required to protect it in accordance with 32 CFR Part 2002 and GSA Order CIO 2103.2 CUI Policy.</span>
</p>
<div class="abs" style="left:0;top:1728px;width:1905px;height:109px;background:#454540"></div>
<span class="t" style="left:480.70px;top:1746px;font-size:20.6px;line-height:27px;font-weight:700;color:#fff;letter-spacing:-0.602px;">SAM.gov</span>
<span class="t" style="left:480.70px;top:1776px;font-size:20.6px;line-height:27px;font-weight:700;color:#fff;letter-spacing:0.041px;">An official website of the U.S. General Services Administration</span>
</footer>
</body></html>
